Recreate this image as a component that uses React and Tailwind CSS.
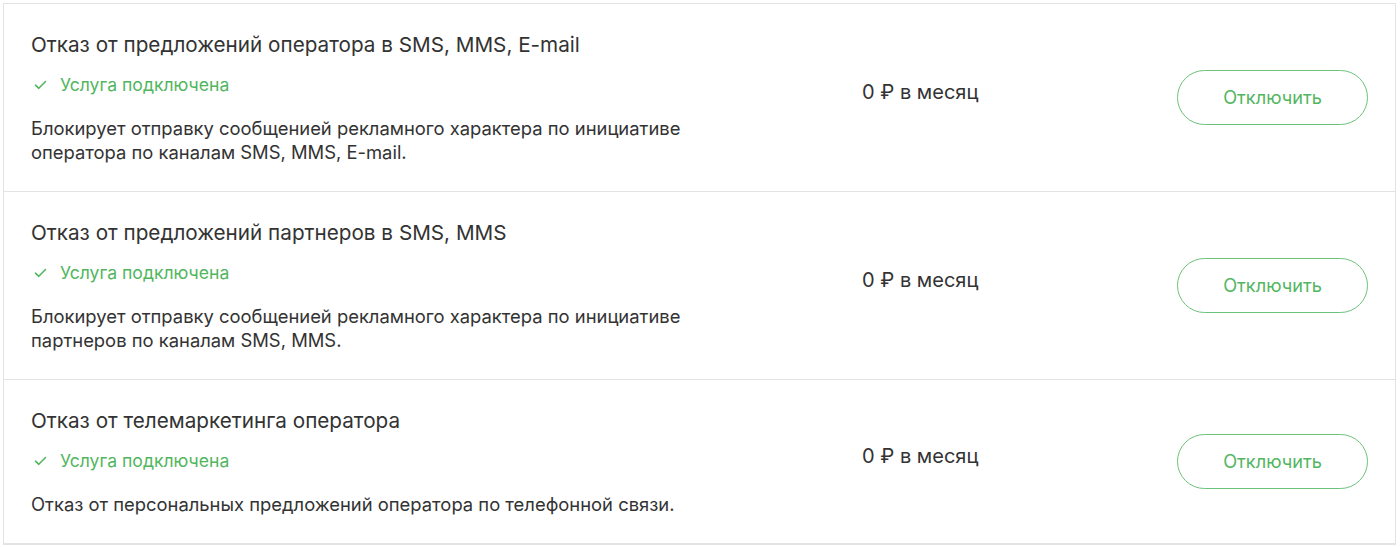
const services = [
  {
    title: "Отказ от предложений оператора в SMS, MMS, E-mail",
    text: [
      "Блокирует отправку сообщенией рекламного характера по инициативе",
      "оператора по каналам SMS, MMS, E-mail.",
    ],
  },
  {
    title: "Отказ от предложений партнеров в SMS, MMS",
    text: [
      "Блокирует отправку сообщенией рекламного характера по инициативе",
      "партнеров по каналам SMS, MMS.",
    ],
  },
  {
    title: "Отказ от телемаркетинга оператора",
    text: ["Отказ от персональных предложений оператора по телефонной связи."],
  },
];

function Check() {
  return (
    <svg width="13" height="10" viewBox="0 0 13 10" fill="none" className="shrink-0">
      <path d="M1.5 5.2 L4.8 8.3 L11.5 1.5" stroke="#52b660" strokeWidth="1.6" strokeLinecap="round" strokeLinejoin="round" />
    </svg>
  );
}

function ServiceRow({ service, last }) {
  return (
    <div className={`flex items-center pl-[27px] pr-[27px] pt-[27px] pb-[27px] ${last ? "" : "border-b border-[#e3e3e3]"}`}>
      <div className="w-[831px] shrink-0">
        <div className="text-[20.7px] leading-[28px] text-[#333333]">{service.title}</div>
        <div className="mt-[14px] flex items-center gap-[13px] pl-[3px] text-[17.6px] leading-[24px] text-[#52b660]">
          <Check />
          <span>Услуга подключена</span>
        </div>
        <div className="mt-[19px] text-[18.4px] leading-[24px] text-[#333333]">
          {service.text.map((line) => (
            <div key={line}>{line}</div>
          ))}
        </div>
      </div>
      <div className="flex-1 pb-[12px] text-[20px] leading-[28px] text-[#333333]">0 ₽ в месяц</div>
      <button className="h-[55px] w-[191px] shrink-0 rounded-full border border-[#6cc27a] bg-white text-[18.2px] text-[#52b660]">
        Отключить
      </button>
    </div>
  );
}

export default function App() {
  return (
    <div className="h-[547px] w-[1400px] overflow-hidden bg-white font-['Inter',sans-serif]">
      <div className="ml-[3px] mt-[3px] w-[1393px] border border-[#e3e3e3]">
        {services.map((s) => (
          <ServiceRow key={s.title} service={s} />
        ))}
      </div>
    </div>
  );
}
